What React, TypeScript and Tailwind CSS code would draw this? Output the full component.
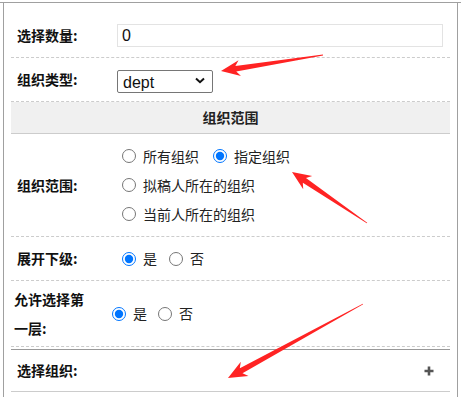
const cjk = "font-['Noto_Sans_CJK_SC','Noto_Sans',sans-serif]";

const Arrow = ({ x1, y1, x2, y2 }: { x1: number; y1: number; x2: number; y2: number }) => {
  const len = Math.hypot(x2 - x1, y2 - y1);
  const angle = (Math.atan2(y2 - y1, x2 - x1) * 180) / Math.PI;
  const pts = [
    [0, -0.4],
    [len - 15, -2.8],
    [len - 19, -8],
    [len, 0],
    [len - 19, 8],
    [len - 15, 2.8],
    [0, 0.4],
  ]
    .map((p) => p.join(','))
    .join(' ');
  return (
    <g transform={`translate(${x1} ${y1}) rotate(${angle})`}>
      <polygon points={pts} fill="#ff2323" />
    </g>
  );
};

const Radio = ({ checked, text, className }: { checked?: boolean; text: string; className?: string }) => (
  <label className={`inline-flex items-center ${className ?? ''}`}>
    <input
      type="radio"
      defaultChecked={checked}
      className="m-0 size-[14px] accent-[#0075ff]"
    />
    <span className="ml-[7px] text-[14px] text-[#222]">{text}</span>
  </label>
);

const Label = ({ children }: { children: React.ReactNode }) => (
  <div className="w-[106px] shrink-0 pl-[6px] text-[14px] font-bold text-[#111]">{children}</div>
);

export default function App() {
  return (
    <div className={`relative w-[461px] h-[397px] overflow-hidden bg-white ${cjk}`}>
      <div className="mt-[2px] border-t border-[#a0a0a0]">
        <div className="ml-[3px] w-[455px] h-[400px] border-x border-[#a0a0a0] px-[7px] pt-[11px]">
          {/* 选择数量 */}
          <div className="flex h-[44px] items-center border-b border-dashed border-[#cccccc]">
            <Label>选择数量:</Label>
            <input
              defaultValue="0"
              className="h-[23px] w-[326px] border border-[#e3e3e3] px-[4px] font-['Liberation_Sans',Arial,sans-serif] text-[16px] text-[#111] outline-none"
            />
          </div>

          {/* 组织类型 */}
          <div className="flex h-[44px] items-center border-b border-dashed border-[#cccccc]">
            <Label>组织类型:</Label>
            <div className="relative mt-[2px]">
              <select
                defaultValue="dept"
                className="h-[23px] w-[96px] appearance-none rounded-[2px] border border-[#767676] bg-white pl-[5px] font-['Liberation_Sans',Arial,sans-serif] text-[16px] text-[#111]"
              >
                <option value="dept">dept</option>
              </select>
              <svg
                className="pointer-events-none absolute right-[8px] top-[8px]"
                width="10"
                height="7"
                viewBox="0 0 10 7"
              >
                <path d="M1 1.5 L5 5.2 L9 1.5" fill="none" stroke="#111" strokeWidth="2" />
              </svg>
            </div>
          </div>

          {/* header */}
          <div className="flex h-[32px] items-center justify-center border-b border-[#cccccc] bg-[#f0f0f0] text-[14px] font-bold text-[#222]">
            组织范围
          </div>

          {/* 组织范围 */}
          <div className="flex h-[103px] items-center border-b border-dashed border-[#cccccc]">
            <Label>组织范围:</Label>
            <div className="flex flex-col pl-[5px] leading-[29px]">
              <div className="flex items-center">
                <Radio text="所有组织" />
                <Radio text="指定组织" checked className="ml-[14px]" />
              </div>
              <div className="flex items-center">
                <Radio text="拟稿人所在的组织" />
              </div>
              <div className="flex items-center">
                <Radio text="当前人所在的组织" />
              </div>
            </div>
          </div>

          {/* 展开下级 */}
          <div className="flex h-[44px] items-center border-b border-dashed border-[#cccccc]">
            <Label>展开下级:</Label>
            <div className="flex items-center pl-[5px]">
              <Radio text="是" checked />
              <Radio text="否" className="ml-[12px]" />
            </div>
          </div>

          {/* 允许选择第一层 */}
          <div className="flex h-[66px] items-center border-b border-dashed border-[#cccccc]">
            <div className="w-[96px] shrink-0 pl-[3px]">
              <div className="w-[80px] text-[14px] font-bold leading-[29px] text-[#111]">允许选择第一层:</div>
            </div>
            <div className="flex items-center pl-[5px]">
              <Radio text="是" checked />
              <Radio text="否" className="ml-[11px]" />
            </div>
          </div>

          {/* 选择组织 */}
          <div className="mt-[2px] flex h-[43px] items-center border-t border-b border-t-[#999999] border-b-[#cccccc] border-b-dashed">
            <Label>选择组织:</Label>
            <div className="flex flex-1 justify-end pr-[16px]">
              <svg width="10" height="10" viewBox="0 0 10 10">
                <path d="M5 0.5 V9.5 M0.5 5 H9.5" stroke="#555" strokeWidth="2.6" />
              </svg>
            </div>
          </div>
        </div>
      </div>

      <svg className="pointer-events-none absolute inset-0" width="461" height="397">
        <Arrow x1={323} y1={55} x2={221} y2={71} />
        <Arrow x1={367} y1={223} x2={292} y2={172} />
        <Arrow x1={363} y1={304} x2={228} y2={378} />
      </svg>
    </div>
  );
}
